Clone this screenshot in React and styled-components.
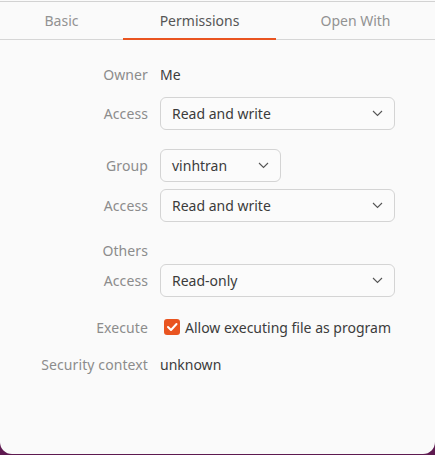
import styled, { createGlobalStyle } from 'styled-components';

const Global = createGlobalStyle`
  html, body {
    margin: 0;
    padding: 0;
    background: #5e1a50;
  }
  body {
    font-family: 'Noto Sans', 'Open Sans', sans-serif;
    font-size: 14px;
  }
`;

const Window = styled.div`
  width: 435px;
  height: 454px;
  background: #fafafa;
  border-top: 1px solid #fafafa;
  box-sizing: border-box;
  border-radius: 0 0 12px 12px;
  display: flex;
  flex-direction: column;
`;

const TabBar = styled.div`
  display: flex;
  height: 39px;
  border-top: 1px solid #d2d2d2;
  border-bottom: 1px solid #d6d6d6;
  box-sizing: border-box;
`;

const Tab = styled.div`
  width: ${(p) => p.w}px;
  display: flex;
  align-items: center;
  justify-content: center;
  color: ${(p) => (p.active ? '#555555' : '#929292')};
  box-sizing: border-box;
  border-bottom: 2px solid ${(p) => (p.active ? '#e95420' : 'transparent')};
  margin-bottom: -1px;
`;

const Form = styled.div`
  display: flex;
  flex-direction: column;
`;

const Row = styled.div`
  display: grid;
  grid-template-columns: 148px 1fr;
  column-gap: 12px;
  align-items: center;
  margin-top: ${(p) => p.mt}px;
  height: ${(p) => p.h || 20}px;
`;

const Label = styled.div`
  text-align: right;
  color: #8c8c8c;
  white-space: nowrap;
  letter-spacing: 0.1px;
`;

const Value = styled.div`
  color: #3c3c3c;
`;

const Combo = styled.div`
  width: ${(p) => p.w}px;
  height: 33px;
  box-sizing: border-box;
  border: 1px solid #d4d4d4;
  border-radius: 6px;
  background: #fbfbfb;
  display: flex;
  align-items: center;
  justify-content: space-between;
  padding: 0 11px 0 11px;
  color: #3c3c3c;
`;

const Check = styled.div`
  display: flex;
  align-items: center;
  gap: 5px;
  margin-left: 4px;
  color: #3c3c3c;
`;

const Box = styled.span`
  width: 16px;
  height: 16px;
  border-radius: 3px;
  background: #e95420;
  display: inline-flex;
  align-items: center;
  justify-content: center;
`;

const Chevron = () => (
  <svg width="11" height="7" viewBox="0 0 11 7">
    <path d="M1 1 L5.5 5.5 L10 1" fill="none" stroke="#555" strokeWidth="1.1" />
  </svg>
);

function Dropdown({ w, children }) {
  return (
    <Combo w={w}>
      <span>{children}</span>
      <Chevron />
    </Combo>
  );
}

export default function App() {
  return (
    <>
      <Global />
      <Window>
        <TabBar>
          <Tab w={123}>Basic</Tab>
          <Tab w={153} active>Permissions</Tab>
          <Tab w={159}>Open With</Tab>
        </TabBar>
        <Form>
          <Row mt={24}>
            <Label>Owner</Label>
            <Value>Me</Value>
          </Row>
          <Row mt={13} h={33}>
            <Label>Access</Label>
            <Dropdown w={235}>Read and write</Dropdown>
          </Row>
          <Row mt={19} h={33}>
            <Label>Group</Label>
            <Dropdown w={121}>vinhtran</Dropdown>
          </Row>
          <Row mt={7} h={33}>
            <Label>Access</Label>
            <Dropdown w={235}>Read and write</Dropdown>
          </Row>
          <Row mt={18}>
            <Label>Others</Label>
          </Row>
          <Row mt={4} h={33}>
            <Label>Access</Label>
            <Dropdown w={235}>Read-only</Dropdown>
          </Row>
          <Row mt={20}>
            <Label>Execute</Label>
            <Check>
              <Box>
                <svg width="12" height="10" viewBox="0 0 12 10">
                  <path d="M2 5 L5 8 L10.5 2" fill="none" stroke="#fff" strokeWidth="2" strokeLinecap="round" strokeLinejoin="round" />
                </svg>
              </Box>
              <span>Allow executing file as program</span>
            </Check>
          </Row>
          <Row mt={17}>
            <Label>Security context</Label>
            <Value>unknown</Value>
          </Row>
        </Form>
      </Window>
    </>
  );
}
